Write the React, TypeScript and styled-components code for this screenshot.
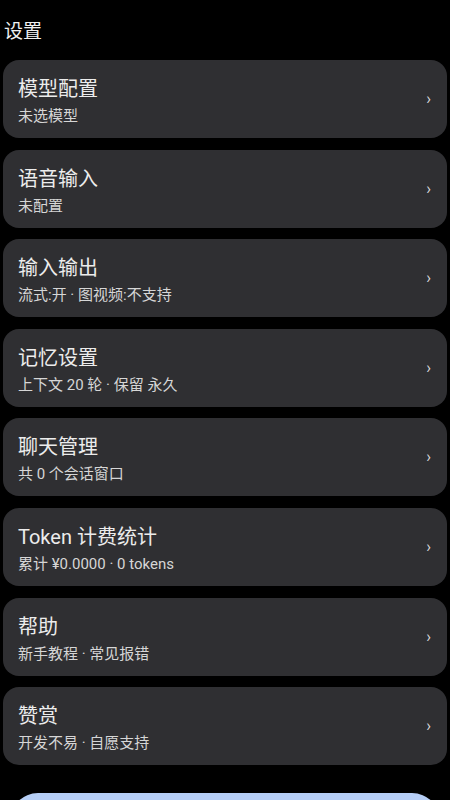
import React from 'react';
import styled, { createGlobalStyle } from 'styled-components';

const GlobalStyle = createGlobalStyle`
  html, body {
    margin: 0;
    padding: 0;
    background-color: #000;
    font-family: 'Roboto', 'Noto Sans CJK SC', sans-serif;
    color: #ececec;
  }
  * {
    box-sizing: border-box;
  }
`;

const Page = styled.div`
  width: 450px;
  height: 800px;
  overflow: hidden;
  background-color: #000;
`;

const TopBar = styled.header`
  height: 60px;
  padding: 20px 4px 0;
  font-size: 19px;
  line-height: 24px;
  color: #f0f0f0;
`;

const List = styled.div`
  display: flex;
  flex-direction: column;
  gap: 11.6px;
  padding: 0 3px;
`;

const Card = styled.div`
  display: flex;
  align-items: center;
  height: 78px;
  padding: 0 16px 0 15px;
  background-color: #2f2f32;
  border-radius: 16px;
`;

const CardText = styled.div`
  flex: 1;
  display: flex;
  flex-direction: column;
  gap: 3px;
  padding-top: 3px;
`;

const Title = styled.div`
  font-size: 20px;
  line-height: 28px;
  color: #ececec;
`;

const Subtitle = styled.div`
  font-size: 15px;
  line-height: 20px;
  color: #d6d6d6;
`;

const Chevron = styled.span`
  font-size: 16px;
  line-height: 16px;
  color: #d8d8d8;
`;

const BottomButton = styled.div`
  margin: 28px 10px 0;
  height: 60px;
  border-radius: 28px;
  background-color: #b6cef6;
`;

const items = [
  { title: '模型配置', sub: '未选模型' },
  { title: '语音输入', sub: '未配置' },
  { title: '输入输出', sub: '流式:开 · 图视频:不支持' },
  { title: '记忆设置', sub: '上下文 20 轮 · 保留 永久' },
  { title: '聊天管理', sub: '共 0 个会话窗口' },
  { title: 'Token 计费统计', sub: '累计 ¥0.0000 · 0 tokens' },
  { title: '帮助', sub: '新手教程 · 常见报错' },
  { title: '赞赏', sub: '开发不易 · 自愿支持' },
];

const App: React.FC = () => {
  return (
    <>
      <GlobalStyle />
      <Page>
        <TopBar>设置</TopBar>
        <List>
          {items.map((item) => (
            <Card key={item.title}>
              <CardText>
                <Title>{item.title}</Title>
                <Subtitle>{item.sub}</Subtitle>
              </CardText>
              <Chevron>›</Chevron>
            </Card>
          ))}
        </List>
        <BottomButton />
      </Page>
    </>
  );
};

export default App;
